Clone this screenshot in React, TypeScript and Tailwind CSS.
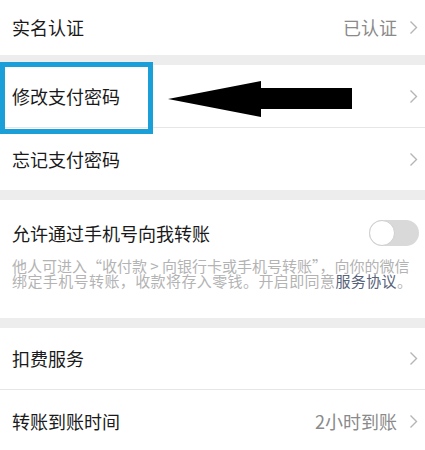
import { ReactNode } from 'react';

const Chevron = () => (
  <svg width="9" height="15" viewBox="0 0 9 15" className="shrink-0">
    <path d="M1.5 1.5 L7.5 7.5 L1.5 13.5" fill="none" stroke="#b5b5b5" strokeWidth="1.4" />
  </svg>
);

interface RowProps {
  label: string;
  value?: string;
  height?: string;
  divider?: boolean;
}

const Row = ({ label, value, height = 'h-[62px]', divider }: RowProps) => (
  <div className={`flex items-center justify-between bg-white pl-3 pr-[7px] ${height} ${divider ? 'border-b border-[#e6e6e6]' : ''}`}>
    <span className="text-[18px] text-[#1a1a1a]">{label}</span>
    <div className="flex items-center gap-3">
      {value && <span className="text-[18px] text-[#8a8a8a]">{value}</span>}
      <Chevron />
    </div>
  </div>
);

const Gap = () => <div className="h-[10px] bg-[#ededed]" />;

const Section = ({ children }: { children: ReactNode }) => <div className="bg-white">{children}</div>;

export default function App() {
  return (
    <div
      className="relative w-[425px] h-[450px] overflow-hidden bg-white"
      style={{ fontFamily: '"Noto Sans CJK SC", "Noto Sans", sans-serif' }}
    >
      <Section>
        <Row label="实名认证" value="已认证" height="h-[55px]" />
      </Section>
      <Gap />
      <Section>
        <Row label="修改支付密码" height="h-[63px]" divider />
        <Row label="忘记支付密码" />
      </Section>
      <Gap />
      <Section>
        <div className="h-[118px] pl-3 pr-[6px] pt-[21px]">
          <div className="flex items-center justify-between h-[24px]">
            <span className="text-[18px] text-[#1a1a1a] leading-[24px]">允许通过手机号向我转账</span>
            <div className="relative w-[50px] h-[26px] rounded-full bg-[#d9d9d9]">
              <div className="absolute left-0 top-0 w-[26px] h-[26px] rounded-full bg-white border border-[#cfcfcf]" />
            </div>
          </div>
          <div className="mt-[13px] text-[15px] leading-[15px] text-[#b3b3b3] whitespace-nowrap">
            <div>他人可进入“收付款 &gt; 向银行卡或手机号转账”，向你的微信</div>
            <div className="tracking-[0.4px]">
              绑定手机号转账，收款将存入零钱。开启即同意<span className="text-[#56627a]">服务协议</span>。
            </div>
          </div>
        </div>
      </Section>
      <Gap />
      <Section>
        <Row label="扣费服务" divider />
        <Row label="转账到账时间" value="2小时到账" />
      </Section>

      {/* annotation overlay */}
      <div className="absolute left-0 top-[62px] w-[153px] h-[72px] border-[5px] border-[#1b9fd8]" />
      <svg className="absolute left-0 top-0" width="425" height="450" viewBox="0 0 425 450">
        <path d="M168 99 L261 81 L261 88 L352 88 L352 109 L261 109 L261 117 Z" fill="#000" />
      </svg>
    </div>
  );
}
